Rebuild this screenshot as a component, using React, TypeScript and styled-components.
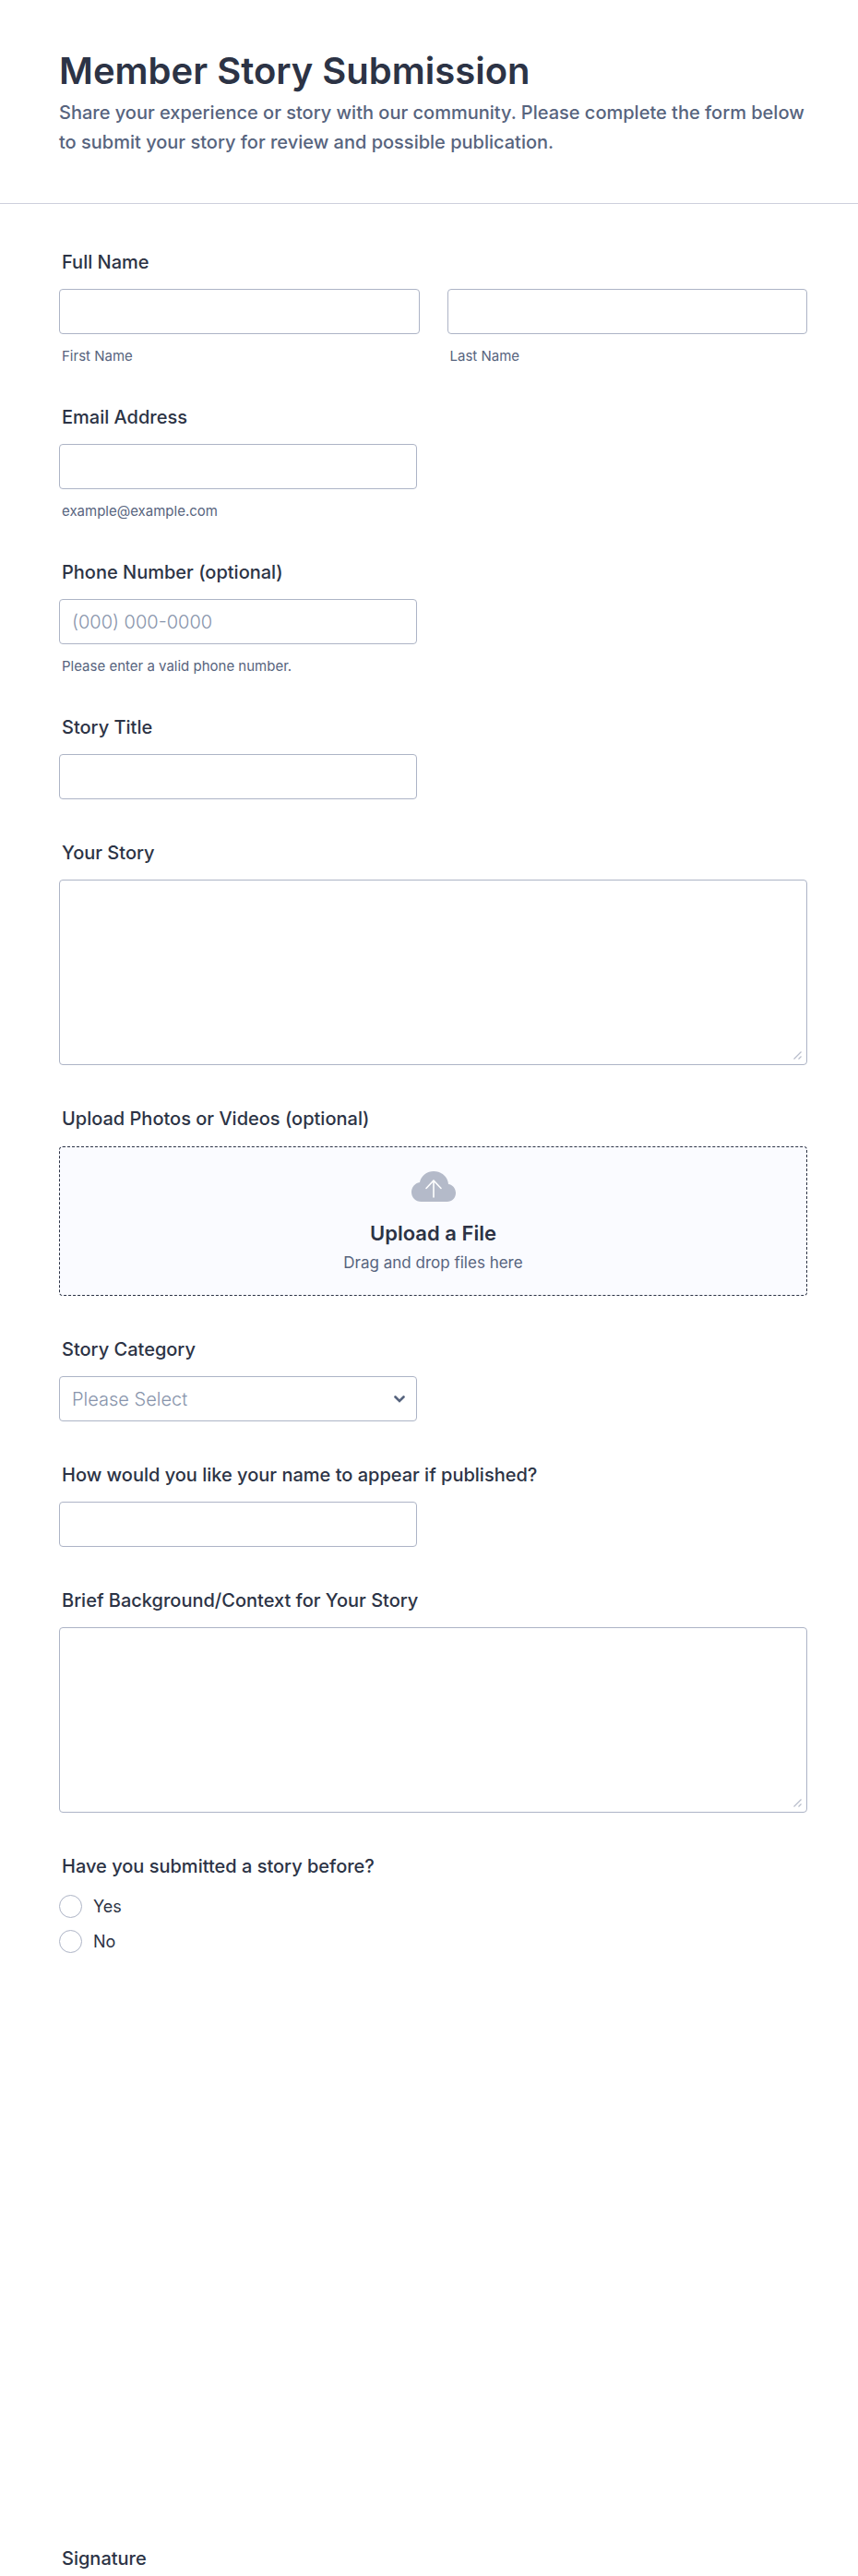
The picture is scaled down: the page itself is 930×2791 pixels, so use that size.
import React from 'react';
import styled, { createGlobalStyle, css } from 'styled-components';

const Global = createGlobalStyle`
  *, *::before, *::after { box-sizing: border-box; }
  body {
    margin: 0;
    background: #fff;
    color: #2c3345;
    font-family: Inter, "Liberation Sans", sans-serif;
  }
`;

const Form = styled.form`
  width: 100%;
`;

const Header = styled.header`
  padding: 52px 55px 50px 64px;
  border-bottom: 1px solid #cdd0dc;
`;

const Title = styled.h1`
  margin: 0;
  font-size: 40px;
  line-height: 50px;
  font-weight: 600;
`;

const Subtitle = styled.p`
  margin: 4px 0 0;
  font-size: 20px;
  line-height: 32px;
  font-weight: 500;
  color: #57647e;
`;

const Body = styled.div`
  display: flex;
  flex-direction: column;
  gap: 46px;
  padding: 51px 55px 0 64px;
`;

const FieldBox = styled.div`
  display: flex;
  flex-direction: column;
`;

const Group = styled.fieldset`
  margin: 0;
  padding: 0;
  border: 0;
  min-width: 0;
`;

const SignatureGroup = styled(Group)`
  margin-top: 598px;
`;

const labelText = css`
  display: block;
  padding: 0 3px;
  margin: 0 0 17px;
  font-size: 20px;
  line-height: 24px;
  font-weight: 500;
`;

const Label = styled.label`
  ${labelText}
`;

const Legend = styled.legend`
  ${labelText}
  &:last-child { margin-bottom: 0; }
`;

const hintText = css`
  margin-top: 16px;
  padding: 0 3px;
  font-size: 15px;
  line-height: 16px;
  color: #57647e;
`;

const Hint = styled.small`
  ${hintText}
`;

const HintLabel = styled.label`
  ${hintText}
`;

const NameRow = styled.div`
  display: grid;
  grid-template-columns: 1fr 1fr;
  gap: 30px;
`;

const controlStyle = css`
  width: 100%;
  border: 1px solid #adb4c6;
  border-radius: 4px;
  background: #fff;
  color: #2c3345;
  font-family: inherit;
  font-size: 20px;
  font-weight: 300;
`;

const Input = styled.input<{ $wide?: boolean }>`
  ${controlStyle}
  max-width: ${p => (p.$wide ? 'none' : '388px')};
  height: 49px;
  padding: 0 13px;
  &::placeholder { color: #8894ab; opacity: 1; }
`;

const TextAreaWrap = styled.div`
  position: relative;
`;

const TextArea = styled.textarea`
  ${controlStyle}
  display: block;
  height: 201px;
  padding: 12px 13px;
  resize: none;
`;

const Grip = styled.svg`
  position: absolute;
  right: 6px;
  bottom: 6px;
  pointer-events: none;
`;

const SelectWrap = styled.div`
  position: relative;
  max-width: 388px;
`;

const Select = styled.select`
  ${controlStyle}
  display: block;
  height: 49px;
  padding: 0 40px 0 13px;
  appearance: none;
  color: #8894ab;
`;

const Chevron = styled.svg`
  position: absolute;
  right: 13px;
  top: 21px;
  pointer-events: none;
`;

const DropZone = styled.label`
  display: flex;
  flex-direction: column;
  align-items: center;
  min-height: 162px;
  margin-top: 1px;
  padding-top: 26px;
  border: 1px dashed #2c3345;
  border-radius: 4px;
  background: #fafbff;
  cursor: pointer;
`;

const FileInput = styled.input`
  position: absolute;
  width: 1px;
  height: 1px;
  opacity: 0;
`;

const DropTitle = styled.span`
  margin-top: 20px;
  font-size: 22px;
  line-height: 28px;
  font-weight: 600;
`;

const DropText = styled.span`
  margin-top: 6px;
  font-size: 17px;
  line-height: 24px;
  color: #57647e;
`;

const Options = styled.div`
  display: flex;
  flex-direction: column;
  gap: 13px;
  margin-top: 2px;
`;

const Option = styled.label`
  display: flex;
  align-items: center;
  gap: 12px;
  font-size: 18px;
  line-height: 25px;
`;

const Radio = styled.input`
  appearance: none;
  width: 25px;
  height: 25px;
  margin: 0;
  border: 1px solid #adb4c6;
  border-radius: 50%;
  background: #fff;
  &:checked { border: 8px solid #2c3345; }
`;

type FieldProps = { id: string; label: string; hint?: string; children: React.ReactNode };

function Field({ id, label, hint, children }: FieldProps) {
  return (
    <FieldBox>
      <Label htmlFor={id}>{label}</Label>
      {children}
      {hint && <Hint id={`${id}-hint`}>{hint}</Hint>}
    </FieldBox>
  );
}

function LongText({ id }: { id: string }) {
  return (
    <TextAreaWrap>
      <TextArea id={id} />
      <Grip width="9" height="9" viewBox="0 0 9 9" aria-hidden="true">
        <path d="M.5 8.500l8-8M5.500 8.500l3-3" fill="none" stroke="#b8bdcb" strokeWidth="1.200" />
      </Grip>
    </TextAreaWrap>
  );
}

function CloudIcon() {
  return (
    <svg width="48" height="33" viewBox="0 0 48 33" aria-hidden="true">
      <path
        d="M10.500 33C4.500 33 0 28.500 0 22.500c0-5 3.500-9.500 9-10.500C10.500 5 16.500 0 24 0c8.500 0 15.500 6 16 14 4.500.5 8 4.500 8 9.500 0 5.500-4 9.500-9.500 9.500Z"
        fill="#b4bac9"
      />
      <path d="M24 28V10M16 18.500l8-8.500 8 8.500" fill="none" stroke="#fff" strokeWidth="1.600" strokeLinecap="round" strokeLinejoin="round" />
    </svg>
  );
}

export default function App() {
  return (
    <>
      <Global />
      <Form>
        <Header>
          <Title>Member Story Submission</Title>
          <Subtitle>
            Share your experience or story with our community. Please complete the form below to submit your
            story for review and possible publication.
          </Subtitle>
        </Header>
        <Body>
          <Group>
            <Legend>Full Name</Legend>
            <NameRow>
              <FieldBox>
                <Input id="first" $wide />
                <HintLabel htmlFor="first">First Name</HintLabel>
              </FieldBox>
              <FieldBox>
                <Input id="last" $wide />
                <HintLabel htmlFor="last">Last Name</HintLabel>
              </FieldBox>
            </NameRow>
          </Group>
          <Field id="email" label="Email Address" hint="example@example.com">
            <Input id="email" type="email" aria-describedby="email-hint" />
          </Field>
          <Field id="phone" label="Phone Number (optional)" hint="Please enter a valid phone number.">
            <Input id="phone" type="tel" placeholder="(000) 000-0000" aria-describedby="phone-hint" />
          </Field>
          <Field id="title" label="Story Title">
            <Input id="title" />
          </Field>
          <Field id="story" label="Your Story">
            <LongText id="story" />
          </Field>
          <Field id="files" label="Upload Photos or Videos (optional)">
            <DropZone>
              <FileInput id="files" type="file" multiple />
              <CloudIcon />
              <DropTitle>Upload a File</DropTitle>
              <DropText>Drag and drop files here</DropText>
            </DropZone>
          </Field>
          <Field id="category" label="Story Category">
            <SelectWrap>
              <Select id="category" defaultValue="">
                <option value="">Please Select</option>
              </Select>
              <Chevron width="12" height="8" viewBox="0 0 12 8" aria-hidden="true">
                <path d="M1.500 1.500 6 6l4.500-4.500" fill="none" stroke="#57647e" strokeWidth="2.600" strokeLinecap="round" />
              </Chevron>
            </SelectWrap>
          </Field>
          <Field id="display" label="How would you like your name to appear if published?">
            <Input id="display" />
          </Field>
          <Field id="background" label="Brief Background/Context for Your Story">
            <LongText id="background" />
          </Field>
          <Group>
            <Legend>Have you submitted a story before?</Legend>
            <Options>
              <Option><Radio type="radio" name="before" value="yes" />Yes</Option>
              <Option><Radio type="radio" name="before" value="no" />No</Option>
            </Options>
          </Group>
          <SignatureGroup>
            <Legend>Signature</Legend>
          </SignatureGroup>
        </Body>
      </Form>
    </>
  );
}
